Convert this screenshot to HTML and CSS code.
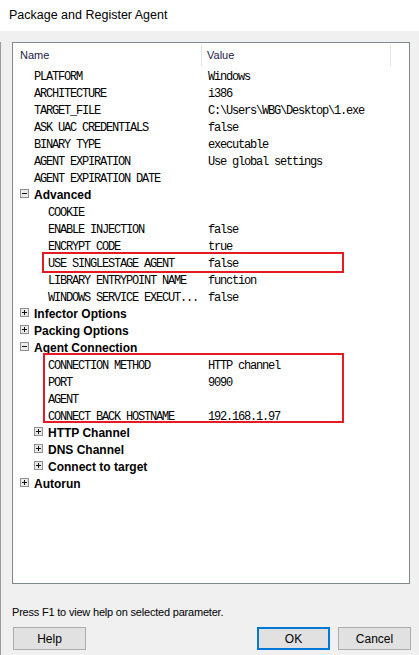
FILE: index.html
```html
<!DOCTYPE html>
<html>
<head>
<meta charset="utf-8">
<link rel="stylesheet" href="styles.css">
</head>
<body>
<div class="titlebar">Package and Register Agent</div>
<div class="main">
  <div class="tree">
    <div class="thead">
      <div class="th th-name">Name</div>
      <div class="th th-value">Value</div>
    </div>
    <div class="rows">
      <div class="row"><span class="key l1">PLATFORM</span><span class="val">Windows</span></div>
      <div class="row"><span class="key l1">ARCHITECTURE</span><span class="val">i386</span></div>
      <div class="row"><span class="key l1">TARGET_FILE</span><span class="val">C:\Users\WBG\Desktop\1.exe</span></div>
      <div class="row"><span class="key l1">ASK UAC CREDENTIALS</span><span class="val">false</span></div>
      <div class="row"><span class="key l1">BINARY TYPE</span><span class="val">executable</span></div>
      <div class="row"><span class="key l1">AGENT EXPIRATION</span><span class="val">Use global settings</span></div>
      <div class="row"><span class="key l1">AGENT EXPIRATION DATE</span><span class="val"></span></div>
      <div class="group g1"><svg class="exp" width="9" height="9" viewBox="0 0 9 9"><rect x="0.5" y="0.5" width="8" height="8" fill="#eaeaea" stroke="#8f8f8f"/><path d="M2 4.5H7" stroke="#111" stroke-width="1"/></svg><span class="gname">Advanced</span></div>
      <div class="row"><span class="key l2">COOKIE</span><span class="val"></span></div>
      <div class="row"><span class="key l2">ENABLE INJECTION</span><span class="val">false</span></div>
      <div class="row"><span class="key l2">ENCRYPT CODE</span><span class="val">true</span></div>
      <div class="row"><span class="key l2">USE SINGLESTAGE AGENT</span><span class="val">false</span></div>
      <div class="row"><span class="key l2">LIBRARY ENTRYPOINT NAME</span><span class="val">function</span></div>
      <div class="row"><span class="key l2">WINDOWS SERVICE EXECUT...</span><span class="val">false</span></div>
      <div class="group g1"><svg class="exp" width="9" height="9" viewBox="0 0 9 9"><rect x="0.5" y="0.5" width="8" height="8" fill="#eaeaea" stroke="#8f8f8f"/><path d="M2 4.5H7M4.5 2V7" stroke="#111" stroke-width="1"/></svg><span class="gname">Infector Options</span></div>
      <div class="group g1"><svg class="exp" width="9" height="9" viewBox="0 0 9 9"><rect x="0.5" y="0.5" width="8" height="8" fill="#eaeaea" stroke="#8f8f8f"/><path d="M2 4.5H7M4.5 2V7" stroke="#111" stroke-width="1"/></svg><span class="gname">Packing Options</span></div>
      <div class="group g1"><svg class="exp" width="9" height="9" viewBox="0 0 9 9"><rect x="0.5" y="0.5" width="8" height="8" fill="#eaeaea" stroke="#8f8f8f"/><path d="M2 4.5H7" stroke="#111" stroke-width="1"/></svg><span class="gname">Agent Connection</span></div>
      <div class="row"><span class="key l2">CONNECTION METHOD</span><span class="val">HTTP channel</span></div>
      <div class="row"><span class="key l2">PORT</span><span class="val">9090</span></div>
      <div class="row"><span class="key l2">AGENT</span><span class="val"></span></div>
      <div class="row"><span class="key l2">CONNECT BACK HOSTNAME</span><span class="val">192.168.1.97</span></div>
      <div class="group g2"><svg class="exp" width="9" height="9" viewBox="0 0 9 9"><rect x="0.5" y="0.5" width="8" height="8" fill="#eaeaea" stroke="#8f8f8f"/><path d="M2 4.5H7M4.5 2V7" stroke="#111" stroke-width="1"/></svg><span class="gname">HTTP Channel</span></div>
      <div class="group g2"><svg class="exp" width="9" height="9" viewBox="0 0 9 9"><rect x="0.5" y="0.5" width="8" height="8" fill="#eaeaea" stroke="#8f8f8f"/><path d="M2 4.5H7M4.5 2V7" stroke="#111" stroke-width="1"/></svg><span class="gname">DNS Channel</span></div>
      <div class="group g2"><svg class="exp" width="9" height="9" viewBox="0 0 9 9"><rect x="0.5" y="0.5" width="8" height="8" fill="#eaeaea" stroke="#8f8f8f"/><path d="M2 4.5H7M4.5 2V7" stroke="#111" stroke-width="1"/></svg><span class="gname">Connect to target</span></div>
      <div class="group g1"><svg class="exp" width="9" height="9" viewBox="0 0 9 9"><rect x="0.5" y="0.5" width="8" height="8" fill="#eaeaea" stroke="#8f8f8f"/><path d="M2 4.5H7M4.5 2V7" stroke="#111" stroke-width="1"/></svg><span class="gname">Autorun</span></div>
    </div>
    <div class="mark mark1"></div>
    <div class="mark mark2"></div>
  </div>
  <div class="hint">Press F1 to view help on selected parameter.</div>
  <div class="buttons">
    <button class="btn">Help</button>
    <span class="spacer"></span>
    <button class="btn btn-default">OK</button>
    <button class="btn">Cancel</button>
  </div>
  <svg class="grip" width="8" height="8" viewBox="0 0 8 8"><g fill="#b4b4b4"><rect x="6" y="0" width="2" height="2"/><rect x="3" y="3" width="2" height="2"/><rect x="6" y="3" width="2" height="2"/><rect x="0" y="6" width="2" height="2"/><rect x="3" y="6" width="2" height="2"/><rect x="6" y="6" width="2" height="2"/></g></svg>
</div>
</body>
</html>
```
FILE: styles.css
```css
html, body {
  margin: 0;
  padding: 0;
}
body {
  width: 419px;
  height: 655px;
  background: #f0f0f0;
  font-family: "Liberation Sans", Arial, sans-serif;
  color: #000;
  overflow: hidden;
}
.titlebar {
  height: 31px;
  background: #fff;
  padding-left: 9px;
  font-size: 12.5px;
  line-height: 31px;
  box-sizing: border-box;
}
.main {
  position: relative;
  height: 624px;
  border-left: 1px solid #9a9a9a;
  box-sizing: border-box;
}
.tree {
  position: relative;
  margin: 11px 0 0 11px;
  width: 398px;
  height: 542px;
  box-sizing: border-box;
  border: 1px solid #828790;
  background: #fff;
}
.thead {
  display: flex;
  height: 24px;
  align-items: center;
  font-size: 11px;
  color: #1b2247;
}
.th {
  height: 22px;
  display: flex;
  align-items: center;
  box-sizing: border-box;
  border-right: 1px solid #e5e5e5;
}
.th-name {
  width: 189px;
  padding-left: 7px;
}
.th-value {
  width: 189px;
  padding-left: 5px;
}
.rows {
  display: flex;
  flex-direction: column;
}
.row {
  display: flex;
  height: 17px;
  box-sizing: border-box;
  padding-top: 2px;
  align-items: center;
  font-family: "Liberation Mono", "Courier New", monospace;
  font-size: 12px;
  letter-spacing: -1.2px;
  white-space: pre;
}
.key {
  width: 189px;
  box-sizing: border-box;
}
.l1 { padding-left: 21px; }
.l2 { padding-left: 35px; }
.val { padding-left: 6px; }
.group {
  display: flex;
  height: 17px;
  align-items: center;
  gap: 5px;
  font-size: 12px;
  font-weight: bold;
}
.g1 { padding-left: 7px; }
.g2 { padding-left: 21px; }
.exp {
  display: block;
  flex: none;
  margin-bottom: 3px;
}
.mark {
  position: absolute;
  border: 2px solid #e51a24;
  box-sizing: border-box;
}
.mark1 {
  left: 29px;
  top: 209px;
  width: 302px;
  height: 21px;
}
.mark2 {
  left: 30px;
  top: 310px;
  width: 301px;
  height: 70px;
}
.hint {
  margin: 21px 0 0 11px;
  font-size: 11px;
  line-height: 14px;
  letter-spacing: -0.2px;
}
.buttons {
  display: flex;
  margin-top: 8px;
  padding: 0 8px 0 12px;
  gap: 8px;
}
.spacer { flex: 1; }
.btn {
  width: 73px;
  height: 23px;
  margin: 0;
  padding: 0;
  background: #e1e1e1;
  border: 1px solid #adadad;
  font-family: "Liberation Sans", Arial, sans-serif;
  font-size: 12px;
  color: #000;
  box-sizing: border-box;
}
.btn-default {
  border: 2px solid #0078d7;
}
.grip {
  position: absolute;
  right: 1px;
  bottom: 1px;
}
```
